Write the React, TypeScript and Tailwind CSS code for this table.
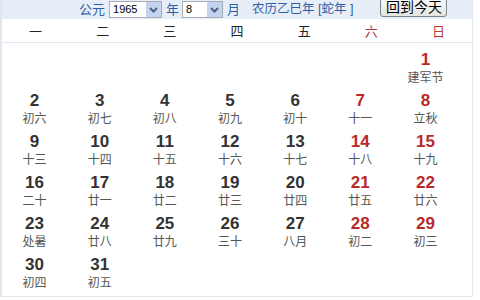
const WEEK = ["一", "二", "三", "四", "五", "六", "日"];

type Day = { d: number; l: string };

const DAYS: Day[] = [
  { d: 1, l: "建军节" },
  { d: 2, l: "初六" },
  { d: 3, l: "初七" },
  { d: 4, l: "初八" },
  { d: 5, l: "初九" },
  { d: 6, l: "初十" },
  { d: 7, l: "十一" },
  { d: 8, l: "立秋" },
  { d: 9, l: "十三" },
  { d: 10, l: "十四" },
  { d: 11, l: "十五" },
  { d: 12, l: "十六" },
  { d: 13, l: "十七" },
  { d: 14, l: "十八" },
  { d: 15, l: "十九" },
  { d: 16, l: "二十" },
  { d: 17, l: "廿一" },
  { d: 18, l: "廿二" },
  { d: 19, l: "廿三" },
  { d: 20, l: "廿四" },
  { d: 21, l: "廿五" },
  { d: 22, l: "廿六" },
  { d: 23, l: "处暑" },
  { d: 24, l: "廿八" },
  { d: 25, l: "廿九" },
  { d: 26, l: "三十" },
  { d: 27, l: "八月" },
  { d: 28, l: "初二" },
  { d: 29, l: "初三" },
  { d: 30, l: "初四" },
  { d: 31, l: "初五" },
];

const Select = ({ value, width }: { value: string; width: string }) => (
  <div className={`flex h-[17px] items-stretch border border-[#a5acb5] bg-white ${width}`}>
    <div className="flex-1 pl-[3px] text-[11px] leading-[15px] text-black">{value}</div>
    <div className="flex w-[15px] items-center justify-center bg-[#c4d3ee]">
      <svg width="9" height="6" viewBox="0 0 9 6">
        <path d="M1 1 L4.5 4.5 L8 1" fill="none" stroke="#4d6185" strokeWidth="2" />
      </svg>
    </div>
  </div>
);

export default function App() {
  // 1965-08-01 is a Sunday, so six blanks first
  const cells: (Day | null)[] = [...Array(6).fill(null), ...DAYS];
  while (cells.length % 7) cells.push(null);

  return (
    <div
      className="h-[300px] w-[480px] overflow-hidden bg-white"
      style={{ fontFamily: '"Liberation Sans", "Noto Sans CJK SC", sans-serif' }}
    >
      <div className="flex h-[297px] w-[473px] flex-col border-b border-l-2 border-r border-[#dfe6ef] border-b-[#e4e4e4]">
        <div className="flex h-[19px] items-center bg-[#e8eef7] pl-[77px] text-[13px] text-[#2d5fa8]">
          <span className="mr-[4px]">公元</span>
          <Select value="1965" width="w-[53px]" />
          <span className="ml-[4px] mr-[3px]">年</span>
          <Select value="8" width="w-[41px]" />
          <span className="ml-[4px]">月</span>
          <span className="ml-[12px] text-[12.5px]">农历乙巳年 [蛇年 ]</span>
          <div className="ml-[27px] -mt-[4px] flex h-[19px] w-[67px] items-center justify-center rounded-[3px] border border-[#7d8590] bg-gradient-to-b from-[#fbfbfb] to-[#e4e4e0] text-[14px] text-black">
            回到今天
          </div>
        </div>
        <div className="grid h-[28px] grid-cols-7 items-center border-b border-[#e1e6ec] pt-[3px] text-[13px]">
          {WEEK.map((w, i) => (
            <div key={w} className={`text-center ${i >= 5 ? "text-[#b63a3a]" : "text-[#222]"}`}>
              {w}
            </div>
          ))}
        </div>
        <div className="grid w-[456px] grid-cols-7 pt-[7px]">
          {cells.map((c, i) => (
            <div key={i} className="flex h-[41.2px] flex-col items-center">
              {c && (
                <>
                  <div
                    className={`text-[17px] font-bold leading-[20px] ${
                      i % 7 >= 5 ? "text-[#b82a2a]" : "text-[#333]"
                    }`}
                  >
                    {c.d}
                  </div>
                  <div className="text-[12px] leading-[16px] text-[#555]">{c.l}</div>
                </>
              )}
            </div>
          ))}
        </div>
      </div>
    </div>
  );
}
